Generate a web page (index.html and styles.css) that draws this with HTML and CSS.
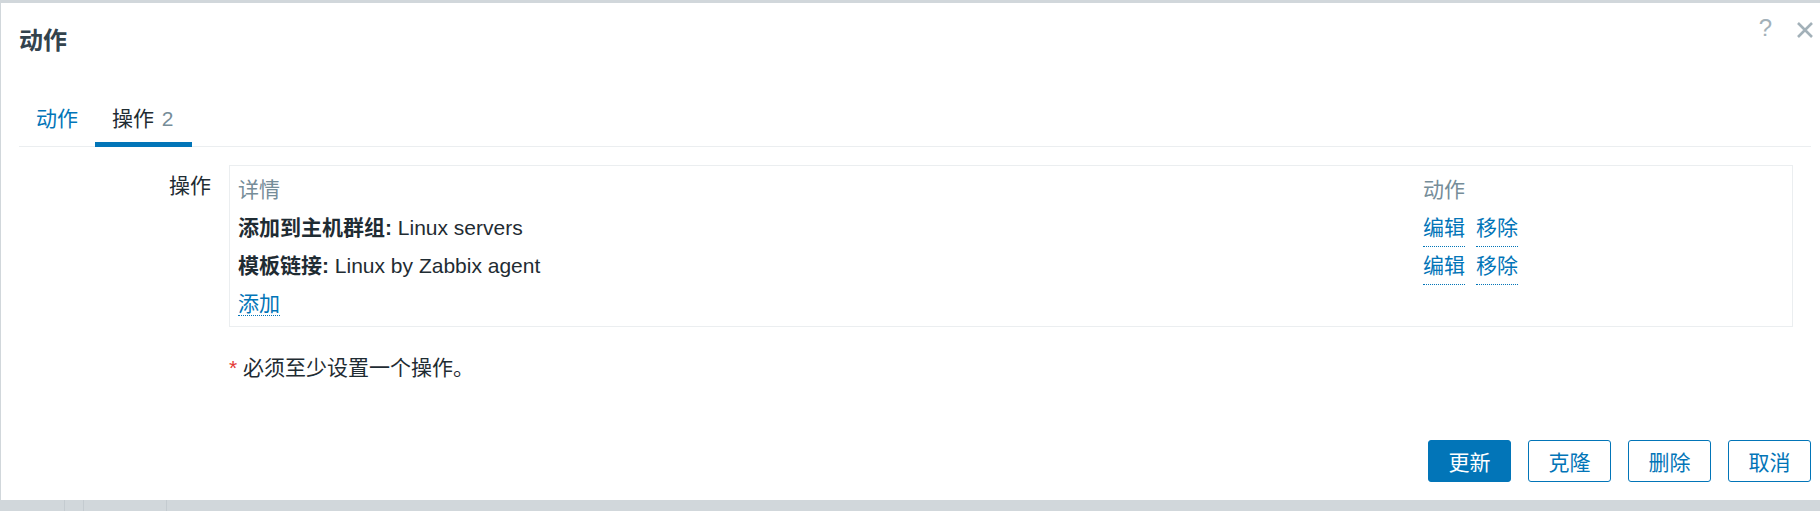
FILE: index.html
```html
<!DOCTYPE html>
<html lang="zh-CN">
<head>
<meta charset="utf-8">
<title>动作</title>
<link rel="stylesheet" href="styles.css">
</head>
<body>
<div class="dialog">
  <div class="head">
    <h4 class="title">动作</h4>
    <div class="head-icons">
      <span class="help">?</span>
      <svg class="close" width="18" height="16" viewBox="0 0 18 16"><path d="M2 1 L16 15 M16 1 L2 15" stroke="#a3b1b9" stroke-width="2.6" fill="none"/></svg>
    </div>
  </div>
  <ul class="tabs">
    <li class="tab">动作</li>
    <li class="tab active">操作 <span class="count">2</span></li>
  </ul>
  <div class="form">
    <div class="label">操作</div>
    <div class="box">
      <div class="cell th">详情</div>
      <div class="cell th">动作</div>
      <div class="cell"><b>添加到主机群组:</b> Linux servers</div>
      <div class="cell actions"><span class="link">编辑</span><span class="link">移除</span></div>
      <div class="cell"><b>模板链接:</b> Linux by Zabbix agent</div>
      <div class="cell actions"><span class="link">编辑</span><span class="link">移除</span></div>
      <div class="cell"><span class="link">添加</span></div>
      <div class="cell"></div>
    </div>
    <div class="spacer"></div>
    <div class="note"><span class="req">*</span> 必须至少设置一个操作。</div>
  </div>
  <div class="buttons">
    <button class="btn primary">更新</button>
    <button class="btn">克隆</button>
    <button class="btn">删除</button>
    <button class="btn">取消</button>
  </div>
</div>
<div class="backdrop">
  <div class="bcell c1"></div>
  <div class="bcell c2"></div>
  <div class="bcell c3"></div>
</div>
</body>
</html>
```

FILE: styles.css
```css
html, body {
  margin: 0;
  padding: 0;
}
body {
  background: #d1d7db;
  font-family: "Liberation Sans", "Noto Sans CJK SC", sans-serif;
  font-size: 21px;
  color: #1f2c33;
  height: 511px;
  overflow: hidden;
}
.dialog {
  position: relative;
  box-sizing: border-box;
  margin: 3px 0 0 1px;
  height: 497px;
  background: #ffffff;
  padding: 0 9px 0 18px;
  display: flex;
  flex-direction: column;
}
.head {
  padding-top: 24px;
}
.title {
  margin: 0;
  font-size: 24px;
  line-height: 28px;
  font-weight: bold;
  color: #33434d;
}
.head-icons {
  position: absolute;
  top: 12px;
  right: 6px;
  display: flex;
  align-items: center;
  gap: 24px;
}
.help {
  font-size: 24px;
  line-height: 26px;
  color: #a3b1b9;
}
.close {
  display: block;
  margin-top: 3px;
}
.tabs {
  list-style: none;
  margin: 52px 0 0 0;
  padding: 0;
  display: flex;
  border-bottom: 1px solid #ebeef0;
}
.tab {
  padding: 0 17px 11px 17px;
  line-height: 24px;
  color: #0275b8;
  border-bottom: 5px solid transparent;
  margin-bottom: -1px;
}
.tab.active {
  color: #1f2c33;
  border-bottom-color: #0275b8;
  padding-right: 18px;
}
.count {
  color: #768d99;
  margin-left: 2px;
}
.form {
  margin-top: 18px;
  display: grid;
  grid-template-columns: 192px 1564px;
  column-gap: 18px;
}
.label {
  text-align: right;
  line-height: 24px;
  padding-top: 9px;
}
.box {
  box-sizing: border-box;
  border: 1px solid #ebeef0;
  padding: 5px 8px 3px 8px;
  display: grid;
  grid-template-columns: 1185px auto;
}
.cell {
  line-height: 38px;
  height: 38px;
  white-space: nowrap;
}
.th {
  color: #768d99;
}
.cell b {
  font-weight: bold;
}
.actions {
  display: flex;
  gap: 11px;
}
.link {
  color: #0275b8;
  border-bottom: 1px dotted #0275b8;
}
.note {
  margin-top: 29px;
  line-height: 24px;
}
.req {
  color: #e33734;
}
.buttons {
  margin-top: auto;
  padding-bottom: 18px;
  display: flex;
  justify-content: flex-end;
  gap: 17px;
}
.btn {
  box-sizing: border-box;
  width: 83px;
  height: 42px;
  border: 1px solid #0275b8;
  border-radius: 3px;
  background: #ffffff;
  color: #0275b8;
  font-family: "Liberation Sans", "Noto Sans CJK SC", sans-serif;
  font-size: 21px;
  padding: 0;
}
.btn.primary {
  background: #0275b8;
  color: #ffffff;
}
.backdrop {
  display: flex;
  height: 11px;
}
.bcell {
  height: 11px;
  border-right: 1px solid #c4cbd0;
}
.c1 { width: 64px; }
.c2 { width: 18px; }
.c3 { width: 82px; }
```
